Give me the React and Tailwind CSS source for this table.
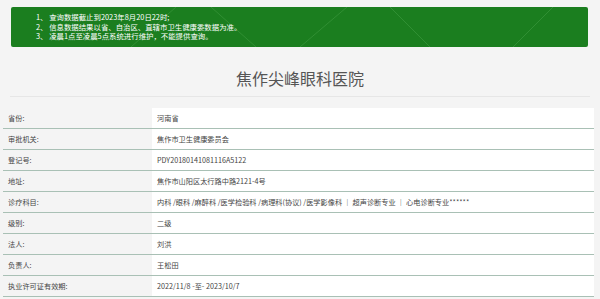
import React from "react";

const notices = [
  "1、 查询数据截止到2023年8月20日22时;",
  "2、 信息数据结果以省、自治区、直辖市卫生健康委数据为准。",
  "3、 凌晨1点至凌晨5点系统进行维护，不能提供查询。",
];

const rows = [
  ["省份:", "河南省"],
  ["审批机关:", "焦作市卫生健康委员会"],
  ["登记号:", "PDY20180141081116A5122"],
  ["地址:", "焦作市山阳区太行路中路2121-4号"],
  [
    "诊疗科目:",
    "内科 /眼科 /麻醉科 /医学检验科 /病理科(协议) /医学影像科 ｜ 超声诊断专业 ｜ 心电诊断专业******",
  ],
  ["级别:", "二级"],
  ["法人:", "刘洪"],
  ["负责人:", "王松田"],
  ["执业许可证有效期:", "2022/11/8 -至- 2023/10/7"],
];

export default function App() {
  return (
    <div
      className="w-[600px] h-[299px] overflow-hidden bg-[#f4f4f4] pt-[7px]"
      style={{ fontFamily: '"Noto Sans CJK SC", "Noto Sans", sans-serif' }}
    >
      {/* notice banner */}
      <div className="relative mx-[11px] w-[577px] h-[40px] rounded-[2px] bg-[#1b7e1f] pl-[25px] pt-[5px] overflow-hidden">
        <svg className="absolute inset-0" width="577" height="40">
          <g stroke="#3f9a42" strokeWidth="0.6" fill="none">
            <line x1="120" y1="40" x2="165" y2="0" />
            <line x1="200" y1="0" x2="245" y2="40" />
            <line x1="289" y1="40" x2="336" y2="0" />
            <line x1="379" y1="0" x2="419" y2="40" />
            <line x1="502" y1="40" x2="542" y2="0" />
          </g>
        </svg>
        <div className="relative flex flex-col text-white text-[7.4px] leading-[9.5px]">
          {notices.map((t, i) => (
            <span key={i}>{t}</span>
          ))}
        </div>
      </div>

      {/* title */}
      <div className="mx-[10px] mt-[18px] h-[32px] border-b border-[#e6e6e6] flex items-start justify-center">
        <h1 className="text-[16px] leading-[26px] text-[#555]">焦作尖峰眼科医院</h1>
      </div>

      {/* info table */}
      <div className="mt-[11px] ml-[3px] w-[591px]">
        {rows.map(([label, value], i) => (
          <div
            key={i}
            className="flex h-[21px] border-b-[1.5px] border-[#a9c0b5] text-[7.2px] text-[#444]"
          >
            <div className="w-[149px] pl-[5px] flex items-center">{label}</div>
            <div className="flex-1 bg-white pl-[5px] flex items-center">{value}</div>
          </div>
        ))}
      </div>
    </div>
  );
}
